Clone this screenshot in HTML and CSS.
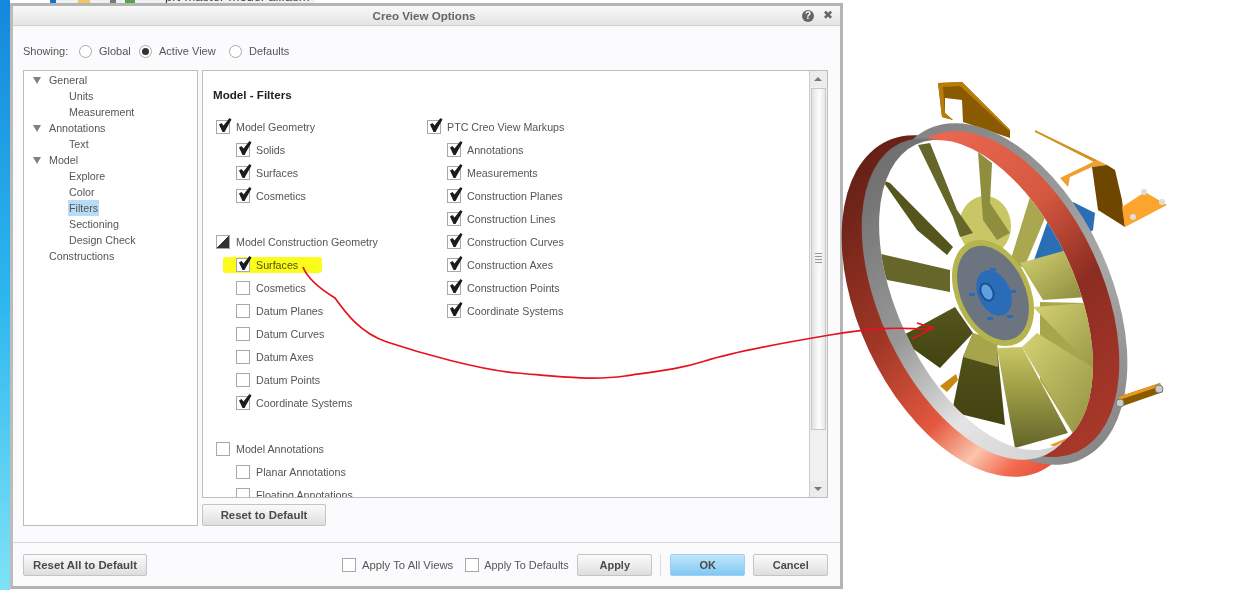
FILE: index.html
```html
<!DOCTYPE html>
<html lang="en">
<head>
  <meta charset="UTF-8" />
  <title>Creo View Options</title>
  <link rel="stylesheet" href="styles.css">
</head>
<body>

<div class="desktop">
  <div class="app-strip">
    <span class="tool tool-blue"></span>
    <span class="tool tool-yellow"></span>
    <span class="tool tool-gray"></span>
    <span class="tool tool-green"></span>
    <span class="app-title">prt-master-model-all.asm_A.A2</span>
  </div>

  <div class="dialog">
    <div class="titlebar">
      <span class="title">Creo View Options</span>
      <span class="help">?</span>
      <span class="close">✖</span>
    </div>

    <div class="showing">
      <span class="showing-label">Showing:</span>
      <label class="radio r-global"><i></i>Global</label>
      <label class="radio r-active on"><i></i>Active View</label>
      <label class="radio"><i></i>Defaults</label>
    </div>

    <div class="main">
      <ul class="tree">
        <li class="open">General</li>
        <li class="leaf">Units</li>
        <li class="leaf">Measurement</li>
        <li class="open">Annotations</li>
        <li class="leaf">Text</li>
        <li class="open">Model</li>
        <li class="leaf">Explore</li>
        <li class="leaf">Color</li>
        <li class="leaf"><span class="selected">Filters</span></li>
        <li class="leaf">Sectioning</li>
        <li class="leaf">Design Check</li>
        <li>Constructions</li>
      </ul>

      <div class="right">
        <div class="panel">
          <div class="panel-body">
            <h2>Model - Filters</h2>
            <div class="cols">
              <div class="col col-a">
                <div class="row"><i class="box on"></i>Model Geometry</div>
                <div class="row sub"><i class="box on"></i>Solids</div>
                <div class="row sub"><i class="box on"></i>Surfaces</div>
                <div class="row sub"><i class="box on"></i>Cosmetics</div>
                <div class="row"></div>
                <div class="row"><i class="box part"></i>Model Construction Geometry</div>
                <div class="row sub marked"><i class="box on"></i>Surfaces</div>
                <div class="row sub"><i class="box"></i>Cosmetics</div>
                <div class="row sub"><i class="box"></i>Datum Planes</div>
                <div class="row sub"><i class="box"></i>Datum Curves</div>
                <div class="row sub"><i class="box"></i>Datum Axes</div>
                <div class="row sub"><i class="box"></i>Datum Points</div>
                <div class="row sub"><i class="box on"></i>Coordinate Systems</div>
                <div class="row"></div>
                <div class="row"><i class="box"></i>Model Annotations</div>
                <div class="row sub"><i class="box"></i>Planar Annotations</div>
                <div class="row sub"><i class="box"></i>Floating Annotations</div>
              </div>
              <div class="col">
                <div class="row"><i class="box on"></i>PTC Creo View Markups</div>
                <div class="row sub"><i class="box on"></i>Annotations</div>
                <div class="row sub"><i class="box on"></i>Measurements</div>
                <div class="row sub"><i class="box on"></i>Construction Planes</div>
                <div class="row sub"><i class="box on"></i>Construction Lines</div>
                <div class="row sub"><i class="box on"></i>Construction Curves</div>
                <div class="row sub"><i class="box on"></i>Construction Axes</div>
                <div class="row sub"><i class="box on"></i>Construction Points</div>
                <div class="row sub"><i class="box on"></i>Coordinate Systems</div>
              </div>
            </div>
          </div>
          <div class="scrollbar">
            <span class="arrow up"></span>
            <span class="thumb"><span class="grip"></span></span>
            <span class="track"></span>
            <span class="arrow down"></span>
          </div>
        </div>
        <button class="btn reset">Reset to Default</button>
      </div>
    </div>

    <div class="footer">
      <button class="btn reset">Reset All to Default</button>
      <label class="apply first"><i class="box"></i>Apply To All Views</label>
      <label class="apply second"><i class="box"></i>Apply To Defaults</label>
      <button class="btn act">Apply</button>
      <span class="sep"></span>
      <button class="btn act ok">OK</button>
      <button class="btn act cancel">Cancel</button>
    </div>
  </div>

  <!-- model picture and the hand drawn arrow -->
  <svg class="art" width="1244" height="590" viewBox="0 0 1244 590">
    <defs>
      <linearGradient id="redOuter" gradientUnits="userSpaceOnUse" x1="880" y1="150" x2="1000" y2="480">
        <stop offset="0" stop-color="#642016"/>
        <stop offset="0.4" stop-color="#a03626"/>
        <stop offset="0.68" stop-color="#e4583f"/>
        <stop offset="0.82" stop-color="#fcc4ac"/>
        <stop offset="0.92" stop-color="#f26a50"/>
        <stop offset="1" stop-color="#e8503a"/>
      </linearGradient>
      <linearGradient id="redInner" gradientUnits="userSpaceOnUse" x1="1000" y1="130" x2="1100" y2="440">
        <stop offset="0" stop-color="#ea6650"/>
        <stop offset="0.35" stop-color="#d4583f"/>
        <stop offset="0.62" stop-color="#8c2c22"/>
        <stop offset="1" stop-color="#a8382a"/>
      </linearGradient>
      <linearGradient id="grayRim" gradientUnits="userSpaceOnUse" x1="1000" y1="120" x2="1080" y2="460">
        <stop offset="0" stop-color="#858585"/>
        <stop offset="0.6" stop-color="#a8a8a8"/>
        <stop offset="1" stop-color="#888"/>
      </linearGradient>
      <linearGradient id="grayInner" gradientUnits="userSpaceOnUse" x1="890" y1="150" x2="1000" y2="460">
        <stop offset="0" stop-color="#6e6e6e"/>
        <stop offset="0.45" stop-color="#999"/>
        <stop offset="0.75" stop-color="#e4e4e4"/>
        <stop offset="1" stop-color="#d4d4d4"/>
      </linearGradient>
      <linearGradient id="oliveA" x1="0" y1="0" x2="0" y2="1">
        <stop offset="0" stop-color="#c9c766"/>
        <stop offset="0.35" stop-color="#a5a44a"/>
        <stop offset="1" stop-color="#64642a"/>
      </linearGradient>
      <linearGradient id="oliveB" x1="0" y1="0" x2="1" y2="1">
        <stop offset="0" stop-color="#d4d272"/>
        <stop offset="1" stop-color="#8b8a3c"/>
      </linearGradient>
      <linearGradient id="oliveDark" x1="0" y1="0" x2="0" y2="1">
        <stop offset="0" stop-color="#55551e"/>
        <stop offset="1" stop-color="#434311"/>
      </linearGradient>
      <clipPath id="hole">
        <ellipse cx="986" cy="295" rx="89" ry="166" transform="rotate(-25 986 295)"/>
      </clipPath>
    </defs>

    <!-- brackets behind the ring -->
    <path d="M938 83L962 82L1010 130L1010 138L963 122L962 100L945 98L945 113L953 120L942 117Z" fill="#8a5a00"/>
    <path d="M938 83L962 82L1010 130L1009 131L960 86L943 87L945 113L953 120L942 117Z" fill="#b87c08"/>
    <path d="M1035 130L1097 160L1096 163L1035 132Z" fill="#d29020"/>
    <path d="M1060 178L1097 160L1107 165L1092 167L1070 177L1068 187Z" fill="#f0a030"/>
    <path d="M1092 167L1107 165L1115 170L1122 200L1125 227L1098 210Z" fill="#6e4600"/>
    <path d="M1122 207L1145 192L1167 205L1125 227Z" fill="#fba42e"/>
    <circle cx="1144" cy="192" r="3" fill="#ddd"/>
    <circle cx="1162" cy="202" r="3" fill="#ddd"/>
    <circle cx="1133" cy="217" r="3" fill="#ddd"/>
    <path d="M1073 202L1095 213L1093 230L1067 250Z" fill="#2a6fb5"/>

    <!-- ring -->
    <path d="M1084 446L1098 436L1124 385L1112 400Z" fill="#8d8d8d"/>
    <ellipse cx="964" cy="306" rx="105" ry="182" transform="rotate(-25 964 306)" fill="url(#redOuter)"/>
    <ellipse cx="1005" cy="294" rx="105" ry="182" transform="rotate(-25 1005 294)" fill="url(#grayRim)"/>
    <ellipse cx="1004" cy="294" rx="98" ry="174" transform="rotate(-25 1004 294)" fill="url(#redInner)"/>
    <ellipse cx="973" cy="299" rx="93" ry="172" transform="rotate(-25 973 299)" fill="url(#grayInner)"/>
    <ellipse cx="986" cy="295" rx="89" ry="166" transform="rotate(-25 986 295)" fill="#fff"/>

    <!-- lower bracket in front of the rim edge -->
    <path d="M1118 397L1160 383L1163 392L1120 407Z" fill="#8a5a00"/>
    <path d="M1118 397L1160 383L1161 386L1119 400Z" fill="#e89a20"/>
    <circle cx="1159" cy="389" r="4" fill="#ccc" stroke="#777"/>
    <circle cx="1120" cy="403" r="4" fill="#ccc" stroke="#777"/>

    <g clip-path="url(#hole)">
      <!-- parts seen through the ring -->
      <path d="M1033 263L1047 223L1073 202L1095 213L1093 230L1067 250Z" fill="#2a6fb5"/>
      <path d="M940 386L956 374L958 380L947 392Z" fill="#c98a14"/>
      <path d="M1050 445L1072 436L1074 440L1056 447Z" fill="#e89a20"/>

      <!-- blades -->
      <ellipse cx="985" cy="226" rx="26" ry="30" fill="#c8c665"/>
      <path d="M918 145L930 143L957 210L973 233L960 237L953 217Z" fill="#66662a"/>
      <path d="M978 152L992 163L990 203L1010 233L997 240L983 220Z" fill="#8f8e3e"/>
      <path d="M882 180L890 183L953 247L947 255L917 230Z" fill="#55551e"/>
      <path d="M872 252L950 270L950 292L887 280Z" fill="#66662a"/>
      <path d="M1030 197L1047 213L1024 268L1010 262Z" fill="#a9a84e"/>
      <path d="M1020 263L1067 250L1087 297L1043 300Z" fill="url(#oliveB)"/>
      <path d="M1040 302L1085 303L1110 320L1110 380L1090 432L1075 437L1040 380Z" fill="#a8a64c"/>
      <path d="M955 307L898 338L940 368L973 333Z" fill="url(#oliveDark)"/>
      <path d="M973 333L963 357L952 412L1005 425L997 347Z" fill="url(#oliveDark)"/>
      <path d="M973 333L963 357L998 367L997 340Z" fill="#a6a54c"/>
      <path d="M997 348L1015 448L1068 433L1022 347Z" fill="url(#oliveA)"/>
      <path d="M1022 347L1075 435L1092 430L1108 377L1037 333Z" fill="url(#oliveB)"/>
      <path d="M1033 307L1108 384L1110 320L1087 303Z" fill="url(#oliveB)"/>
    </g>

    <!-- hub -->
    <ellipse cx="993" cy="293" rx="37" ry="56" transform="rotate(-25 993 293)" fill="#b5b44e"/>
    <ellipse cx="993" cy="293" rx="32" ry="50" transform="rotate(-25 993 293)" fill="#6c7480"/>
    <ellipse cx="994" cy="293" rx="16" ry="24" transform="rotate(-25 994 293)" fill="#2a6cb8"/>
    <ellipse cx="987" cy="292" rx="6" ry="9" transform="rotate(-25 987 292)" fill="#5fa0e0" stroke="#1d4f90" stroke-width="2"/>
    <g fill="#2a6cb8">
      <rect x="969" y="293" width="6" height="3"/>
      <rect x="1010" y="290" width="6" height="3"/>
      <rect x="987" y="317" width="6" height="3"/>
      <rect x="1007" y="315" width="6" height="3"/>
      <rect x="990" y="268" width="6" height="3"/>
    </g>

    <!-- arrow -->
    <path d="M303 267C308 280 322 290 335 298C345 312 360 333 387 342C420 353 480 370 517 373S590 381 625 376S680 369 705 361S770 345 830 335S900 329 933 329" fill="none" stroke="#e8101c" stroke-width="1.7"/>
    <path d="M917 323L933 328L912 339" fill="none" stroke="#e8101c" stroke-width="1.7"/>
  </svg>
</div>

</body>
</html>
```

FILE: styles.css
```css
html, body {
  margin: 0;
  padding: 0;
  background: #fff;
}
.desktop {
  position: relative;
  width: 1244px;
  height: 590px;
  overflow: hidden;
  font-family: "Liberation Sans", Arial, sans-serif;
  font-size: 10.7px;
  color: #555;
}
.desktop::before {
  content: "";
  position: absolute;
  left: 0;
  top: 0;
  width: 10px;
  height: 590px;
  background: linear-gradient(#1488dc, #2cb6ee 50%, #7fe2f6);
}
.app-strip {
  position: absolute;
  left: 50px;
  top: 0;
  width: 265px;
  height: 4px;
  background: #eef0f3;
  overflow: hidden;
}
.tool {
  position: absolute;
  top: 0;
  height: 4px;
}
.tool-blue {
  left: 0;
  width: 6px;
  background: #1572c8;
}
.tool-yellow {
  left: 28px;
  width: 12px;
  background: #f0c860;
}
.tool-gray {
  left: 60px;
  width: 6px;
  background: #777;
}
.tool-green {
  left: 75px;
  width: 10px;
  background: #5aa050;
}
.app-title {
  position: absolute;
  left: 115px;
  top: -11px;
  font-size: 13px;
  color: #444;
  white-space: nowrap;
}
.dialog {
  position: absolute;
  left: 10px;
  top: 3px;
  width: 827px;
  height: 580px;
  display: flex;
  flex-direction: column;
  background: #fbfbfd;
  border: 3px solid #b4b4b4;
  border-left-color: #bcbcbc;
}
.titlebar {
  position: relative;
  height: 20px;
  flex: none;
  box-sizing: border-box;
  padding: 3px 5px 0 0;
  text-align: center;
  background: linear-gradient(#f8f8f8, #e4e4e4);
  border-bottom: 1px solid #d0d0d0;
}
.title {
  font-size: 11.6px;
  font-weight: bold;
  color: #666;
}
.help {
  position: absolute;
  right: 26px;
  top: 4px;
  width: 12px;
  height: 12px;
  border-radius: 50%;
  background: #666;
  color: #fff;
  font-size: 10px;
  font-weight: bold;
  line-height: 12px;
  text-align: center;
}
.close {
  position: absolute;
  right: 7px;
  top: 2px;
  font-family: "DejaVu Sans", sans-serif;
  font-size: 12px;
  color: #666;
}
.showing {
  display: flex;
  align-items: center;
  height: 44px;
  flex: none;
  box-sizing: border-box;
  padding: 6px 0 0 10px;
  font-size: 11px;
}
.showing-label {
  width: 56px;
}
.radio {
  display: flex;
  align-items: center;
}
.r-global {
  width: 60px;
}
.r-active {
  width: 90px;
}
.radio i {
  width: 11px;
  height: 11px;
  margin-right: 7px;
  border: 1px solid #aaa;
  border-radius: 50%;
  background: #fff;
  position: relative;
}
.radio.on i::after {
  content: "";
  position: absolute;
  left: 2px;
  top: 2px;
  width: 7px;
  height: 7px;
  border-radius: 50%;
  background: #333;
}
.main {
  display: flex;
  flex: none;
  height: 456px;
  padding-left: 10px;
}
.tree {
  list-style: none;
  width: 173px;
  flex: none;
  margin: 0 4px 0 0;
  padding: 1px 0 0;
  background: #fff;
  border: 1px solid #bdbdbd;
}
.tree li {
  position: relative;
  height: 16px;
  line-height: 16px;
  padding-left: 25px;
}
.tree li.leaf {
  padding-left: 45px;
}
.tree li.open::before {
  content: "";
  position: absolute;
  left: 9px;
  top: 5px;
  border-left: 4.5px solid transparent;
  border-right: 4.5px solid transparent;
  border-top: 7px solid #808080;
}
.selected {
  display: inline-block;
  margin-left: -1px;
  padding: 0 1px;
  background: #b6dcf6;
}
.right {
  display: flex;
  flex-direction: column;
  align-items: flex-start;
}
.panel {
  display: flex;
  width: 624px;
  height: 426px;
  background: #fff;
  border: 1px solid #bdbdbd;
  overflow: hidden;
}
.panel-body {
  flex: 1;
  overflow: hidden;
  padding: 17px 0 0 10px;
}
h2 {
  margin: 0 0 13px;
  font-size: 11.6px;
  line-height: 14px;
  font-weight: bold;
  color: #222;
}
.cols {
  display: flex;
}
.col-a {
  width: 211px;
}
.row {
  position: relative;
  height: 23px;
  display: flex;
  align-items: center;
  padding-left: 3px;
}
.row.sub {
  padding-left: 23px;
}
.box {
  position: relative;
  flex: none;
  width: 12px;
  height: 12px;
  margin-right: 6px;
  border: 1px solid #a8a8a8;
  background: #fff;
}
.box.on::after {
  content: "";
  position: absolute;
  left: 1px;
  top: -4px;
  width: 14px;
  height: 16px;
  background: #1c1c1c;
  clip-path: polygon(1px 8px, 3.5px 6.5px, 5.5px 9px, 11.5px 1.5px, 13.5px 3px, 6.5px 15.5px, 4.5px 15.5px);
}
.box.part {
  background: linear-gradient(135deg, #fff 50%, #333 50%);
}
.marked::before {
  content: "";
  position: absolute;
  left: 10px;
  top: 4px;
  width: 99px;
  height: 16px;
  background: #fbfb1c;
  border-radius: 3px;
  mix-blend-mode: multiply;
}
.scrollbar {
  width: 17px;
  flex: none;
  display: flex;
  flex-direction: column;
  background: #f0f0f0;
  border-left: 1px solid #cdcdcd;
}
.arrow {
  position: relative;
  height: 16px;
  flex: none;
  background: #ececec;
}
.arrow::after {
  content: "";
  position: absolute;
  left: 4px;
  top: 6px;
  border-left: 4px solid transparent;
  border-right: 4px solid transparent;
}
.arrow.up::after {
  border-bottom: 4px solid #777;
}
.arrow.down::after {
  border-top: 4px solid #777;
}
.thumb {
  position: relative;
  height: 342px;
  flex: none;
  box-sizing: border-box;
  margin: 1px 0 0 1px;
  width: 15px;
  border: 1px solid #c8c8c8;
  background: linear-gradient(90deg, #e2e2e2, #fdfdfd 55%, #e8e8e8);
}
.grip {
  position: absolute;
  left: 3px;
  top: 164px;
  width: 7px;
  height: 12px;
  background: repeating-linear-gradient(#999 0 1px, #f4f4f4 1px 3px);
}
.track {
  flex: 1;
}
.btn {
  height: 22px;
  padding: 0;
  border: 1px solid #c4c4c4;
  border-radius: 2px;
  background: linear-gradient(#fbfbfb, #dedede);
  font-family: inherit;
  font-size: 11.4px;
  font-weight: bold;
  color: #4a4a4a;
}
.reset {
  width: 124px;
  flex: none;
}
.right .reset {
  margin-top: 6px;
}
.footer {
  position: relative;
  display: flex;
  align-items: center;
  flex: none;
  height: 44px;
  margin-top: 16px;
  box-sizing: border-box;
  padding: 0 12px 0 10px;
  border-top: 1px solid #d8d8d8;
  font-size: 11.3px;
}
.apply {
  display: flex;
  align-items: center;
  flex: none;
  white-space: nowrap;
}
.apply.first {
  margin-left: 195px;
  margin-right: 12px;
}
.apply.second {
  width: 104px;
  font-size: 10.9px;
}
.apply.second .box {
  margin-right: 5px;
}
.act {
  flex: none;
  width: 75px;
  margin-left: 8px;
  font-size: 11px;
}
.sep {
  flex: none;
  width: 1px;
  height: 22px;
  margin: 0 9px 0 8px;
  background: #ddd;
}
.ok {
  margin-left: 0;
  background: linear-gradient(#c4e6fb, #7ec8f4);
  border-color: #9fcfee;
}
.art {
  position: absolute;
  left: 0;
  top: 0;
  pointer-events: none;
}
```
